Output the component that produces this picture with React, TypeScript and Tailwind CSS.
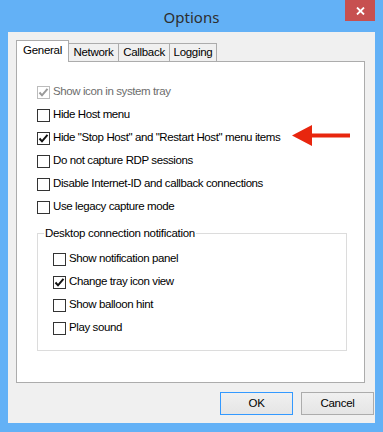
import React from "react";

const font = { fontFamily: '"Liberation Sans", Arial, sans-serif' };

function Check({ color }: { color: string }) {
  return (
    <svg width="11" height="11" viewBox="0 0 11 11">
      <path d="M1.5 5.5 L4 8.3 L9.5 1.8" fill="none" stroke={color} strokeWidth="2" />
    </svg>
  );
}

function Option({
  label,
  checked = false,
  disabled = false,
}: {
  label: string;
  checked?: boolean;
  disabled?: boolean;
}) {
  return (
    <div className="flex items-center h-[23px]">
      <span
        className={`w-[13px] h-[13px] bg-white border flex items-center justify-center ${
          disabled ? "border-[#bcbcbc]" : "border-[#333333]"
        }`}
      >
        {checked && <Check color={disabled ? "#9a9a9a" : "#111111"} />}
      </span>
      <span
        className={`ml-[3px] text-[11.5px] tracking-[-0.4px] leading-none -mt-[1px] ${
          disabled ? "text-[#6d6d6d]" : "text-black"
        }`}
      >
        {label}
      </span>
    </div>
  );
}

export default function App() {
  const tabs = ["Network", "Callback", "Logging"];

  return (
    <div className="w-[383px] h-[432px] bg-[#63b1f6] flex flex-col" style={font}>
      {/* title bar */}
      <div className="h-[32px] grid grid-cols-[1fr_auto_1fr]">
        <div />
        <div className="text-[15px] text-[#2e2e2e] pt-[6px]" style={{ fontFamily: '"Noto Sans", sans-serif' }}>
          Options
        </div>
        <div className="flex justify-end pr-[8px]">
          <div className="w-[30px] h-[21px] bg-[#c75050] flex items-center justify-center">
            <svg width="9" height="8" viewBox="0 0 9 8">
              <path d="M1 0.5 L8 7.5 M8 0.5 L1 7.5" stroke="white" strokeWidth="1.8" />
            </svg>
          </div>
        </div>
      </div>

      {/* client area */}
      <div className="mx-[8px] w-[367px] h-[391px] bg-[#f0f0f0] pl-[8px] pt-[8px] text-[11.5px] tracking-[-0.3px]">
        {/* tab strip */}
        <div className="flex items-end h-[21px]">
          <div className="w-[53px] h-[22px] bg-white border border-b-0 border-[#acacac] text-black flex items-center justify-center pb-[1px] -mb-[1px] relative z-10">
            General
          </div>
          {tabs.map((t, i) => (
            <div
              key={t}
              className={`h-[18px] bg-[#f0f0f0] border border-l-0 border-b-0 border-[#acacac] text-black flex items-center justify-center ${
                i === 0 ? "w-[50px]" : i === 1 ? "w-[51px]" : "w-[47px]"
              }`}
            >
              {t}
            </div>
          ))}
        </div>

        {/* panel */}
        <div className="relative w-[349px] h-[322px] bg-white border border-[#acacac] pl-[20px] pt-[19px]">
          <Option label="Show icon in system tray" checked disabled />
          <Option label="Hide Host menu" />
          <Option label={'Hide "Stop Host" and "Restart Host" menu items'} checked />
          <Option label="Do not capture RDP sessions" />
          <Option label="Disable Internet-ID and callback connections" />
          <Option label="Use legacy capture mode" />

          <fieldset className="mt-[6px] w-[310px] h-[126px] border border-[#dcdcdc]">
            <legend className="ml-[6px] px-[1px] text-black leading-[16px]">
              Desktop connection notification
            </legend>
            <div className="mt-[7px] pl-[15px]">
              <Option label="Show notification panel" />
              <Option label="Change tray icon view" checked />
              <Option label="Show balloon hint" />
              <Option label="Play sound" />
            </div>
          </fieldset>

          {/* annotation arrow */}
          <svg
            className="absolute left-[275px] top-[63px]"
            width="60"
            height="22"
            viewBox="0 0 60 22"
          >
            <path d="M0 10.5 L20 0 L20 8.5 L58 8.5 L58 12.5 L20 12.5 L20 21 Z" fill="#e8260e" />
          </svg>
        </div>

        {/* buttons */}
        <div className="flex justify-end gap-[8px] w-[358px] mt-[9px]">
          <button className="w-[73px] h-[23px] border border-[#3399ff] bg-gradient-to-b from-[#f0f0f0] to-[#e5e5e5] text-black">
            OK
          </button>
          <button className="w-[73px] h-[23px] border border-[#acacac] bg-gradient-to-b from-[#f0f0f0] to-[#e5e5e5] text-black">
            Cancel
          </button>
        </div>
      </div>
    </div>
  );
}
